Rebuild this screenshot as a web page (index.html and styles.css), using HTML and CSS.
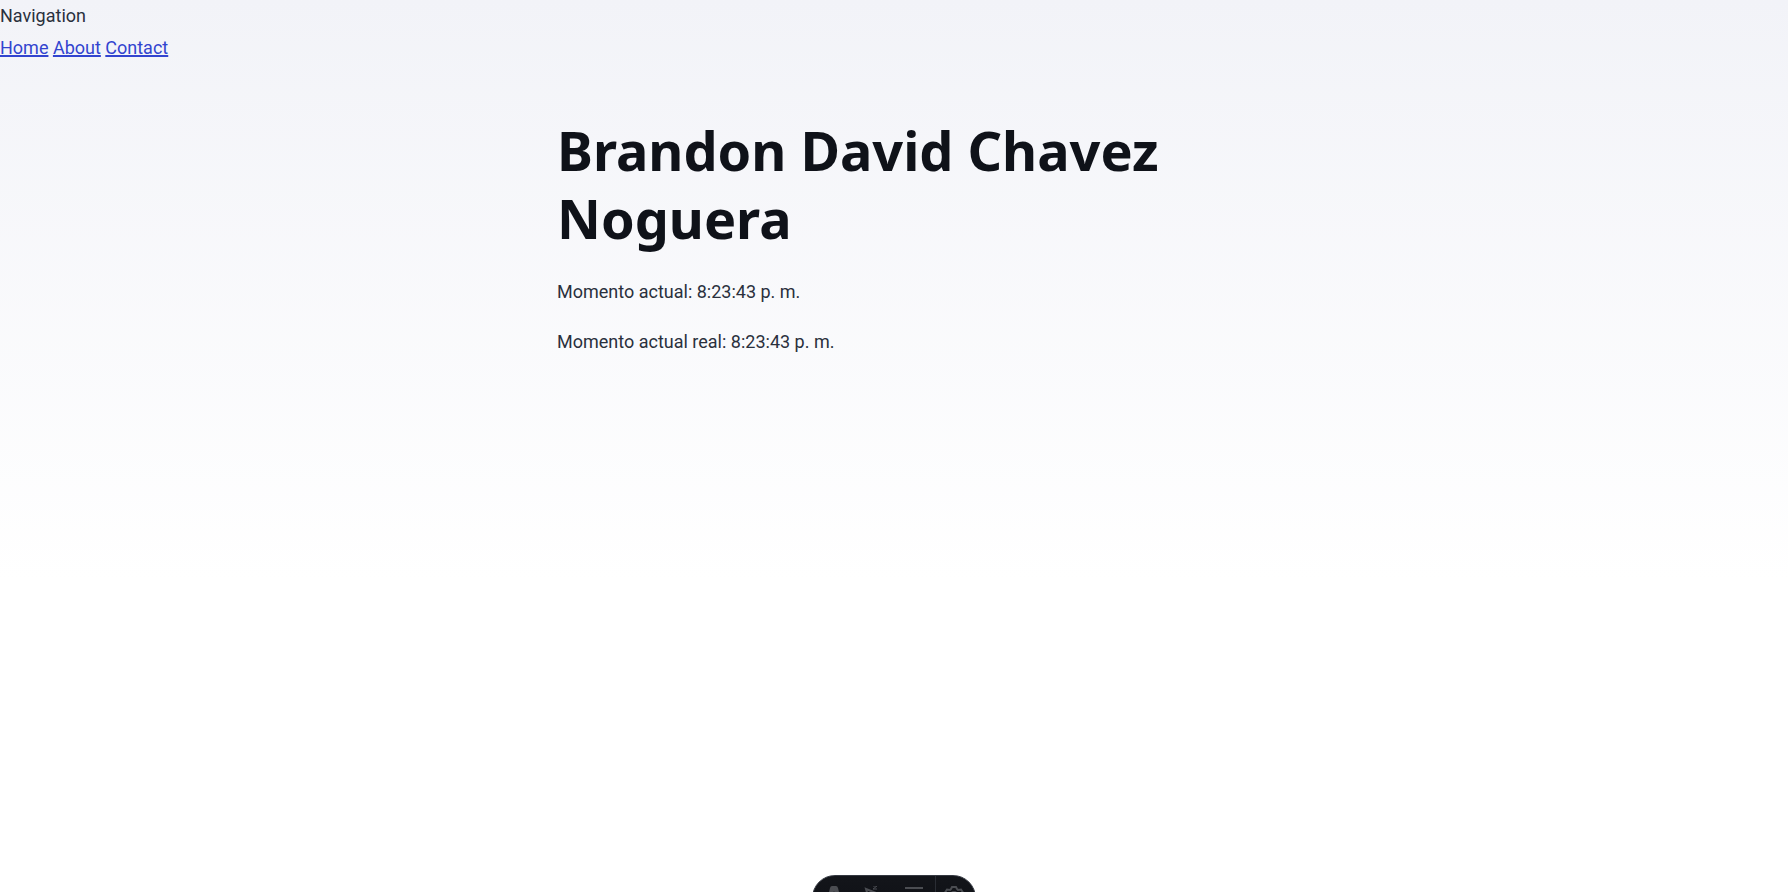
FILE: index.html
```
<!DOCTYPE html>
<html lang="es">
<head>
<meta charset="utf-8">
<meta name="viewport" content="width=device-width, initial-scale=1">
<title>Brandon David Chavez Noguera</title>
<link rel="stylesheet" href="styles.css">
</head>
<body>
<header>
  <div>Navigation</div>
  <nav class="links"><a href="#">Home</a> <a href="#">About</a> <a href="#">Contact</a></nav>
</header>
<main class="content">
  <h1 class="title">Brandon David Chavez Noguera</h1>
  <p class="moment">Momento actual: 8:23:43 p. m.</p>
  <p class="moment">Momento actual real: 8:23:43 p. m.</p>
</main>
<div class="toolbar">
  <button class="tool" aria-label="Menu"><svg viewBox="0 0 20 20"><path fill="currentColor" d="M3 14L6 2q.5-2 2-2h4q1.500 0 2 2l3 12q-2-1-4-1l-3-8-3 8q-2 0-4 1zM7 15h6c0 2-2 2-3 4-1-2-3-2-3-4z"/></svg></button>
  <button class="tool" aria-label="Inspect"><svg viewBox="0 0 20 20"><path class="line" d="M2 3l13 5-6 3-3 6z"/><path class="thin" d="M9 0h4l-4 3h4"/></svg></button>
  <button class="tool" aria-label="Audit"><svg viewBox="0 0 20 20"><path class="line" d="M1 2h18M1 10h18M1 18h18"/></svg></button>
  <button class="tool settings" aria-label="Settings"><svg viewBox="0 0 20 20"><path class="line" d="M7 3l1-2h4l1 2 1 1 3-.5 2 3L17 9v2l2 2-2 3-3-.500-1 1-1 2H8l-1-2-1-1-3 .500-2-3L3 11V9L1 6.500l2-3L6 4z"/><circle class="line" cx="10" cy="10" r="4"/></svg></button>
</div>
</body>
</html>
```
FILE: styles.css
```
* { box-sizing: border-box; }
html { background: #fff; }
body {
  margin: 0;
  min-height: 100vh;
  background: linear-gradient(#f2f3f8, #fff 580px) no-repeat;
  color: #2a303d;
  font: 18px/32px Roboto, sans-serif;
  overflow: hidden;
}
.links a { color: #3244cf; text-decoration-thickness: 2px; }
.content {
  max-width: 674px;
  margin: 0 auto;
  padding: 52px 0;
}
.title {
  margin: 0 0 24px;
  color: #0f1219;
  font-family: "Noto Sans", sans-serif;
  font-size: 54px;
  line-height: 68px;
  font-weight: 700;
}
.moment { margin: 0 0 18px; }
.toolbar {
  position: fixed;
  left: 50%;
  bottom: -29px;
  transform: translateX(-50%);
  display: grid;
  grid-template-columns: 42px 38px 42px 40px;
  width: 164px;
  height: 46px;
  overflow: hidden;
  border: 1px solid #343841;
  border-radius: 23px;
  background: linear-gradient(#13151a, #0d0f14);
}
.tool {
  display: flex;
  justify-content: center;
  align-items: flex-start;
  padding: 10px 0 0;
  border: 0;
  background: none;
  color: #4b4d52;
}
.tool svg { width: 20px; height: 20px; }
.settings { border-left: 1px solid #2a2d34; padding-right: 4px; }
.line { fill: none; stroke: currentColor; stroke-width: 2; }
.thin { fill: none; stroke: currentColor; stroke-width: 1; }
```
